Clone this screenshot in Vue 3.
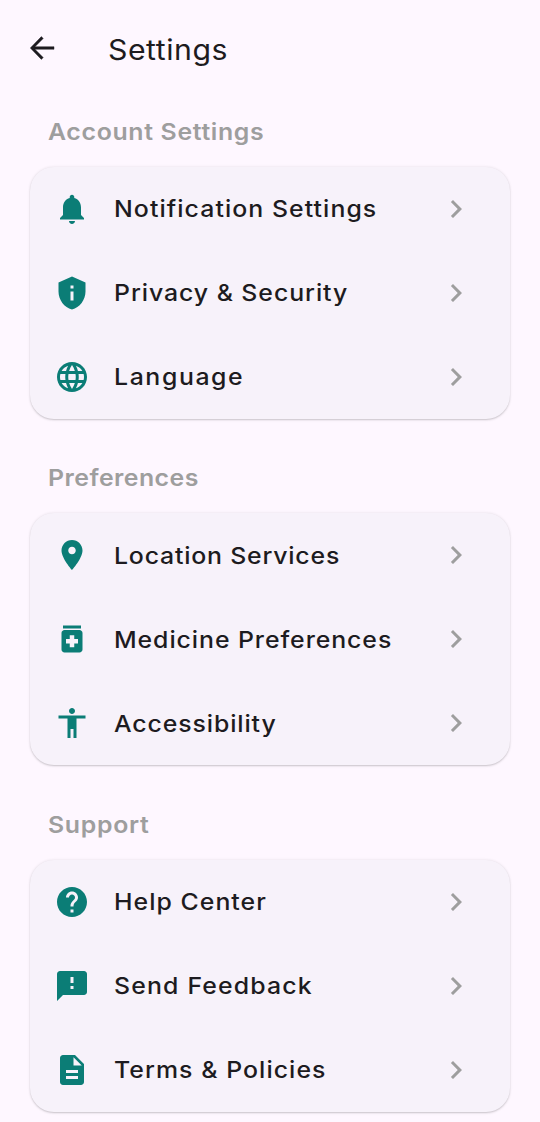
<script setup>
const icons = {
  bell: 'M12 22c1.1 0 2-.9 2-2h-4c0 1.1.89 2 2 2zm6-6v-5c0-3.07-1.64-5.64-4.5-6.32V4c0-.83-.67-1.5-1.5-1.5s-1.5.67-1.5 1.5v.68C7.63 5.36 6 7.92 6 11v5l-2 2v1h16v-1l-2-2z',
  shield: 'M12 1L3 5v6c0 5.55 3.84 10.74 9 12 5.16-1.26 9-6.45 9-12V5l-9-4zm-1 6h2v2h-2V7zm0 4h2v6h-2v-6z',
  globe: 'M11.99 2C6.47 2 2 6.48 2 12s4.47 10 9.99 10C17.52 22 22 17.52 22 12S17.52 2 11.99 2zm6.93 6h-2.95c-.32-1.25-.78-2.45-1.38-3.56 1.84.63 3.37 1.91 4.33 3.56zM12 4.04c.83 1.2 1.48 2.53 1.91 3.96h-3.82c.43-1.43 1.08-2.76 1.91-3.96zM4.26 14C4.1 13.36 4 12.69 4 12s.1-1.36.26-2h3.38c-.08.66-.14 1.32-.14 2 0 .68.06 1.34.14 2H4.26zm.82 2h2.95c.32 1.25.78 2.45 1.38 3.56-1.84-.63-3.37-1.9-4.33-3.56zm2.95-8H5.08c.96-1.66 2.49-2.93 4.33-3.56C8.81 5.55 8.35 6.75 8.03 8zM12 19.96c-.83-1.2-1.48-2.53-1.91-3.96h3.82c-.43 1.43-1.08 2.76-1.91 3.96zM14.34 14H9.66c-.09-.66-.16-1.32-.16-2 0-.68.07-1.35.16-2h4.68c.09.65.16 1.32.16 2 0 .68-.07 1.34-.16 2zm.25 5.56c.6-1.11 1.06-2.31 1.38-3.56h2.95c-.96 1.65-2.49 2.93-4.33 3.56zM16.36 14c.08-.66.14-1.32.14-2 0-.68-.06-1.34-.14-2h3.38c.16.64.26 1.31.26 2s-.1 1.36-.26 2h-3.38z',
  pin: 'M12 2C8.13 2 5 5.13 5 9c0 5.25 7 13 7 13s7-7.75 7-13c0-3.87-3.13-7-7-7zm0 9.5c-1.38 0-2.5-1.12-2.5-2.5s1.12-2.5 2.5-2.5 2.5 1.12 2.5 2.5-1.12 2.5-2.5 2.5z',
  medicine: 'M6 3h12v2H6zm11 3H7c-1.1 0-2 .9-2 2v11c0 1.1.9 2 2 2h10c1.1 0 2-.9 2-2V8c0-1.1-.9-2-2-2zm-1 9h-2.5v2.5h-3V15H8v-3h2.5V9.500h3V12H16v3z',
  person: 'M12 2c1.1 0 2 .9 2 2s-.9 2-2 2-2-.9-2-2 .9-2 2-2zm9 7h-6v13h-2v-6h-2v6H9V9H3V7h18v2z',
  help: 'M12 2C6.48 2 2 6.48 2 12s4.48 10 10 10 10-4.480 10-10S17.520 2 12 2zm1 17h-2v-2h2v2zm2.070-7.750l-.9.920C13.450 12.900 13 13.500 13 15h-2v-.5c0-1.100.450-2.100 1.170-2.830l1.240-1.260c.370-.360.590-.860.590-1.410 0-1.100-.9-2-2-2s-2 .9-2 2H8c0-2.210 1.790-4 4-4s4 1.790 4 4c0 .880-.360 1.680-.930 2.250z',
  feedback: 'M20 2H4c-1.100 0-1.990.9-1.990 2L2 22l4-4h14c1.100 0 2-.9 2-2V4c0-1.100-.9-2-2-2zm-7 12h-2v-2h2v2zm0-4h-2V6h2v4z',
  document: 'M14 2H6c-1.100 0-1.990.9-1.990 2L4 20c0 1.100.890 2 1.990 2H18c1.100 0 2-.9 2-2V8l-6-6zm2 16H8v-2h8v2zm0-4H8v-2h8v2zm-3-5V3.500L18.500 9H13z'
}

const sections = [
  { title: 'Account Settings', track: 'account', items: [
    { label: 'Notification Settings', icon: 'bell' },
    { label: 'Privacy & Security', icon: 'shield' },
    { label: 'Language', icon: 'globe' }
  ] },
  { title: 'Preferences', track: 'preferences', items: [
    { label: 'Location Services', icon: 'pin' },
    { label: 'Medicine Preferences', icon: 'medicine' },
    { label: 'Accessibility', icon: 'person' }
  ] },
  { title: 'Support', track: 'support', items: [
    { label: 'Help Center', icon: 'help' },
    { label: 'Send Feedback', icon: 'feedback' },
    { label: 'Terms & Policies', icon: 'document' }
  ] }
]
</script>

<template>
  <main class="screen">
    <header class="app-bar">
      <button class="back" aria-label="Back">
        <svg viewBox="0 0 24 24"><path d="M20 11.150H7.300l5.500-5.500L11.600 4.400 4.200 12l7.400 7.600 1.200-1.250-5.500-5.500H20z" /></svg>
      </button>
      <h1>Settings</h1>
    </header>
    <section v-for="s in sections" :key="s.title" class="group">
      <h2 :class="s.track">{{ s.title }}</h2>
      <ul class="card">
        <li v-for="item in s.items" :key="item.label" class="row">
          <svg class="icon" viewBox="0 0 24 24"><path :d="icons[item.icon]" fill-rule="evenodd" /></svg>
          <span class="label" :class="item.icon">{{ item.label }}</span>
          <svg class="chevron" viewBox="0 0 24 24"><path d="M10 6L8.590 7.410 13.170 12l-4.580 4.590L10 18l6-6z" /></svg>
        </li>
      </ul>
    </section>
  </main>
</template>

<style>
body { background: #fef7ff; }
</style>

<style scoped>
.screen {
  height: 1122px;
  overflow: hidden;
  background: #fef7ff;
  color: #1d1b20;
  font-family: Inter, "Noto Sans", sans-serif;
}
.app-bar {
  display: flex;
  align-items: center;
  height: 96px;
  padding-left: 24px;
}
.back {
  display: flex;
  width: 36px;
  height: 36px;
  margin-right: 47.5px;
  padding: 0;
  border: 0;
  background: none;
}
.back svg {
  width: 36px;
  height: 36px;
  fill: #1d1b20;
  stroke: #1d1b20;
  stroke-width: .3;
  stroke-linejoin: round;
}
/* Slightly extended letterforms */
h1, h2, .label {
  transform: scaleX(1.08);
  transform-origin: left center;
  white-space: nowrap;
}
h1 {
  margin: 3px 0 0;
  font-size: 28px;
  font-weight: 400;
  line-height: 42px;
  letter-spacing: .5px;
}
h2 {
  box-sizing: border-box;
  width: max-content;
  height: 70.5px;
  margin: 0 0 0 48.4px;
  padding-top: 18.5px;
  color: #9e9e9e;
  font-size: 23px;
  font-weight: 600;
  line-height: 35px;
}
.group + .group h2 { height: 94.5px; padding-top: 42.5px; }
.card {
  margin: 0 30px;
  padding: 0;
  border-radius: 24px;
  background: #f7f2fa;
  box-shadow: 0 1px 1.5px rgba(0, 0, 0, .13), 0 .5px 3px rgba(0, 0, 0, .1);
  list-style: none;
}
.row {
  display: flex;
  align-items: center;
  height: 84px;
  padding: 0 36px 0 24px;
}
.icon { width: 36px; height: 36px; fill: #0b7d76; }
.label {
  margin-left: 24.4px;
  padding-top: 1px;
  font-size: 23px;
  font-weight: 450;
  line-height: 34px;
}
.chevron { width: 36px; height: 36px; margin-left: auto; fill: #9e9e9e; }

/* Per-label tracking */
.account { letter-spacing: .62px; }
.preferences { letter-spacing: .42px; }
.support { letter-spacing: .65px; }
.bell { letter-spacing: .98px; }
.shield { letter-spacing: .87px; }
.globe { letter-spacing: 1.48px; }
.pin { letter-spacing: .74px; }
.medicine { letter-spacing: .86px; }
.person { letter-spacing: .82px; }
.help { letter-spacing: .96px; }
.feedback { letter-spacing: 1.08px; }
.document { letter-spacing: .98px; }
</style>
